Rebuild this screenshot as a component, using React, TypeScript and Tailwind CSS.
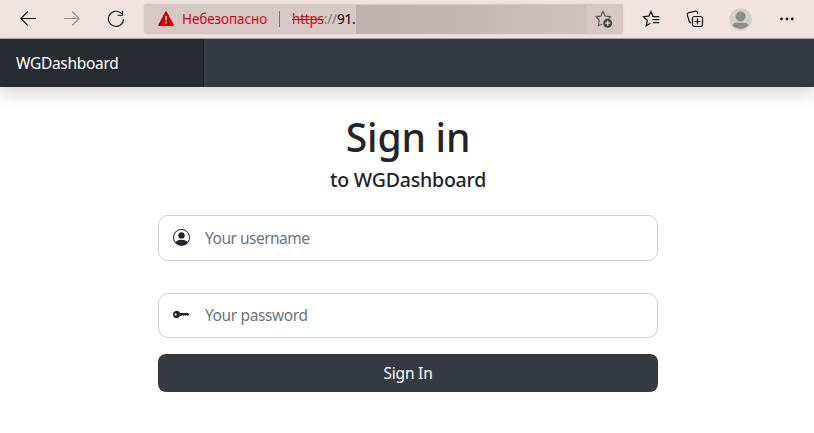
import { BsPersonCircle, BsKeyFill } from "react-icons/bs";
import type { ReactNode } from "react";

function Toolbar() {
  return (
    <div className="flex h-[39px] items-center border-b border-[#aaa3a3] bg-[#f1e3e2] text-[#191919]">
      <svg className="ml-5 h-4 w-4" viewBox="0 0 16 16" fill="none" stroke="currentColor" strokeWidth="1.1">
        <path d="M16 7.5H.8M7.8.5l-7 7 7 7" />
      </svg>
      <svg className="ml-7 h-4 w-4" viewBox="0 0 16 16" fill="none" stroke="#938b8b" strokeWidth="1.1">
        <path d="M0 7.5h15.2M8.2.5l7 7-7 7" />
      </svg>
      <svg className="ml-[27px] h-[18px] w-[18px]" viewBox="0 0 18 18" fill="none" stroke="currentColor" strokeWidth="1.15">
        <path d="M14.8 3.9A7.6 7.6 0 1 0 16.6 9M15.5.8v4.4H10.6" />
      </svg>
      <div className="ml-[19px] flex h-[30px] w-[479px] items-center rounded-[3px] bg-[#d7c8c7] shadow-[0_0_3px_rgba(120,80,80,0.12)]">
        <svg className="ml-[14px] h-4 w-4 shrink-0" viewBox="0 0 16 16">
          <path d="M8 1 15 14.2H1Z" fill="#d00000" stroke="#d00000" strokeWidth="1.6" strokeLinejoin="round" />
          <path d="M8 5v4.6M8 10.8v1.6" stroke="#e8d5d4" strokeWidth="1.5" />
        </svg>
        <span className="ml-2 w-[85px] text-[13.5px] leading-4 tracking-[-0.1px] whitespace-nowrap text-[#cc0b10]">Небезопасно</span>
        <span className="ml-3 h-4 w-px bg-[#7d7070]" />
        <span className="ml-3 w-[64px] text-[13.5px] leading-4 tracking-[-0.2px] whitespace-nowrap">
          <span className="text-[#cc0b10] line-through">https</span>
          <span className="text-[#777]">://</span>
          <span className="text-black">91.</span>
        </span>
        <span className="h-[29px] w-[231px] shrink-0 bg-linear-to-r from-[#bfb2b1] via-[#c3b6b5] to-[#d0c2c1]" />
        <svg className="ml-[8px] h-[18px] w-[18px] shrink-0" viewBox="0 0 18 18" fill="none">
          <path d="M7.4 14 3.4 15.6 4.3 10.2 .9 6.6 5.7 6.1 8 1.4 10.3 6.1 15.5 6.8 13.6 8.6" stroke="#625b5b" strokeWidth="1.2" />
          <circle cx="12.7" cy="13.2" r="4.5" fill="#474646" />
          <path d="M10.2 13.2h5M12.7 10.7v5" stroke="#e5dad9" strokeWidth="1.2" />
        </svg>
      </div>
      <svg className="ml-[19px] h-[18px] w-[18px]" viewBox="0 0 18 18" fill="none" stroke="currentColor" strokeWidth="1.25">
        <path d="M8.5 13.3 4.3 15.8 5.3 10.2 1.5 6.7 6.8 6.1 9 1.5 11 6.5H17.3M10.5 9.5h6.8M11 12.5h6.3" />
      </svg>
      <svg className="ml-[26px] h-[18px] w-[18px]" viewBox="0 0 18 18" fill="none" stroke="currentColor" strokeWidth="1.2">
        <rect x="6.5" y="6.5" width="10" height="10" rx="2" />
        <path d="M11.5 8.5v6M8.5 11.5h6M5 13 3.4 11.8 1.2 4.7Q.9 3.3 2.2 2.8L9.6 1.2Q11 1 11.4 2.3L11.8 4" />
      </svg>
      <svg className="ml-[25px] h-[23px] w-[23px]" viewBox="0 0 23 23">
        <circle cx="11.5" cy="11.5" r="11.3" fill="#d2d0cd" />
        <circle cx="11.5" cy="8.5" r="5" fill="#8e8a87" />
        <path d="M3.4 17Q5 14.8 7 14.8h9q2 0 3.6 2.2A10.5 10.5 0 0 1 3.4 17Z" fill="#8e8a87" />
      </svg>
      <svg className="ml-[27px] h-4 w-4" viewBox="0 0 16 16" fill="currentColor">
        <circle cx="2.5" cy="8" r="1.4" /><circle cx="8" cy="8" r="1.4" /><circle cx="13.3" cy="8" r="1.4" />
      </svg>
    </div>
  );
}

function Field({ icon, label, type, className }: { icon: ReactNode; label: string; type: string; className: string }) {
  return (
    <label className={`flex w-full items-center rounded-[10px] border border-[#ced2da] bg-white pl-[14px] ${className}`}>
      {icon}
      <input type={type} placeholder={label} className="ml-[15px] w-80 bg-transparent pt-px text-[15.5px] outline-none placeholder:text-[#6c757d]" />
    </label>
  );
}

export default function App() {
  return (
    <div className="h-[433px] overflow-hidden bg-white font-['Noto_Sans','Open_Sans',sans-serif] text-[#212529]">
      <Toolbar />
      <nav className="flex h-12 bg-[#343a40] shadow-[0_8px_16px_rgba(0,0,0,0.15)]">
        <div className="flex w-[204px] items-center border-r border-[#202327] bg-[#272b30] pt-0.5 pl-4 text-[15.5px] tracking-[-0.3px] text-white">WGDashboard</div>
      </nav>
      <main className="ml-[158px] flex w-[500px] flex-col items-center pt-[26px]">
        <h1 className="text-[39px] leading-[48px] font-medium tracking-[-0.2px] whitespace-nowrap">Sign in</h1>
        <h2 className="mt-[7px] text-[19.5px] leading-6 font-medium tracking-[-0.2px] whitespace-nowrap">to WGDashboard</h2>
        <Field className="mt-[23px] h-[46px] tracking-[-0.5px]" type="text" label="Your username" icon={<BsPersonCircle className="h-[17px] w-[17px] -translate-y-px" />} />
        <Field className="mt-8 h-[45px] tracking-[-0.38px]" type="password" label="Your password" icon={<BsKeyFill className="h-[17px] w-[17px] -translate-y-px" />} />
        <button className="mt-4 h-[38px] w-full rounded-lg bg-[#343a40] pt-0.5 text-[15.5px] tracking-[-0.2px] text-white">Sign In</button>
      </main>
    </div>
  );
}
